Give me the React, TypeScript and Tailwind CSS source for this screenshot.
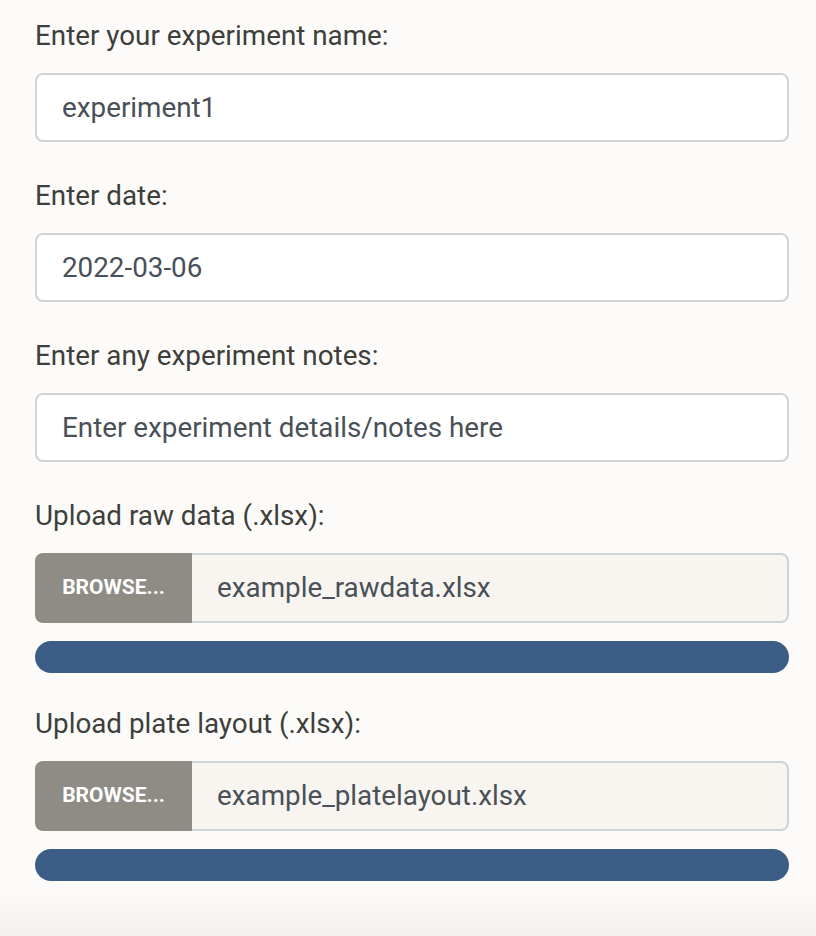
import React from 'react';

const labelCls = 'block text-[27.8px] leading-[36px] text-[#3e3f3a] mb-[19px]';

const TextField: React.FC<{ label: string; value: string }> = ({ label, value }) => (
  <div className="mb-[36px]">
    <label className={labelCls}>{label}</label>
    <div className="h-[69px] flex items-center px-[25px] bg-white border-2 border-[#ced4da] rounded-[8px] text-[27.8px] text-[#495057]">
      {value}
    </div>
  </div>
);

const FileField: React.FC<{ label: string; file: string }> = ({ label, file }) => (
  <div className="mb-[33px]">
    <label className={labelCls}>{label}</label>
    <div className="h-[70px] flex">
      <div className="w-[157px] shrink-0 flex items-center justify-center bg-[#8e8c84] rounded-l-[8px] text-white text-[21px] font-bold">
        BROWSE...
      </div>
      <div className="flex-1 flex items-center pl-[25px] bg-[#f8f5f0] border-2 border-l-0 border-[#ced4da] rounded-r-[8px] text-[27.8px] text-[#495057]">
        {file}
      </div>
    </div>
    <div className="mt-[18px] h-[32px] rounded-full bg-[#3c5e86]" />
  </div>
);

export default function App() {
  return (
    <div
      className="w-[816px] h-[936px] overflow-hidden relative bg-[#fcfbfa]"
      style={{ fontFamily: 'Roboto, "Liberation Sans", sans-serif' }}
    >
      <div className="pl-[35px] pr-[27px] pt-[18px]">
        <TextField label="Enter your experiment name:" value="experiment1" />
        <TextField label="Enter date:" value="2022-03-06" />
        <TextField label="Enter any experiment notes:" value="Enter experiment details/notes here" />
        <FileField label="Upload raw data (.xlsx):" file="example_rawdata.xlsx" />
        <FileField label="Upload plate layout (.xlsx):" file="example_platelayout.xlsx" />
      </div>
      <div className="absolute left-0 right-0 bottom-0 h-[50px] bg-gradient-to-b from-[#fcfbfa] to-[#f1f0ee]" />
    </div>
  );
}
